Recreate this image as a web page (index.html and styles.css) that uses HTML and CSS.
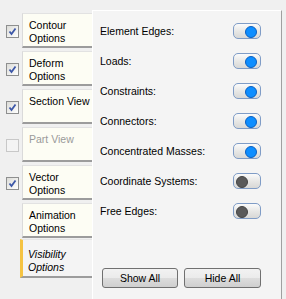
FILE: index.html
```html
<!DOCTYPE html>
<html lang="en">
<head>
  <meta charset="UTF-8" />
  <title>Visibility Options</title>
  <link rel="stylesheet" href="styles.css">
</head>
<body>

  <div class="dialog">

    <!-- Side tabs -->
    <div class="tab-list">
      <div class="tab-item">
        <span class="check on"><svg viewBox="0 0 11 11"><path d="M2.5 5.5 L4.5 8 L8.5 2.5" /></svg></span>
        <div class="tab">Contour<br>Options</div>
      </div>
      <div class="tab-item">
        <span class="check on"><svg viewBox="0 0 11 11"><path d="M2.5 5.5 L4.5 8 L8.5 2.5" /></svg></span>
        <div class="tab">Deform<br>Options</div>
      </div>
      <div class="tab-item">
        <span class="check on"><svg viewBox="0 0 11 11"><path d="M2.5 5.5 L4.5 8 L8.5 2.5" /></svg></span>
        <div class="tab">Section View</div>
      </div>
      <div class="tab-item">
        <span class="check disabled"></span>
        <div class="tab disabled">Part View</div>
      </div>
      <div class="tab-item">
        <span class="check on"><svg viewBox="0 0 11 11"><path d="M2.5 5.5 L4.5 8 L8.5 2.5" /></svg></span>
        <div class="tab">Vector<br>Options</div>
      </div>
      <div class="tab-item">
        <span class="check none"></span>
        <div class="tab">Animation<br>Options</div>
      </div>
      <div class="tab-item selected">
        <div class="tab">Visibility<br>Options</div>
      </div>
    </div>

    <!-- Visibility panel -->
    <div class="panel">
      <div class="rows">
        <div class="row"><span>Element Edges:</span><span class="toggle on"></span></div>
        <div class="row"><span>Loads:</span><span class="toggle on"></span></div>
        <div class="row"><span>Constraints:</span><span class="toggle on"></span></div>
        <div class="row"><span>Connectors:</span><span class="toggle on"></span></div>
        <div class="row"><span>Concentrated Masses:</span><span class="toggle on"></span></div>
        <div class="row"><span>Coordinate Systems:</span><span class="toggle"></span></div>
        <div class="row"><span>Free Edges:</span><span class="toggle"></span></div>
      </div>

      <div class="buttons">
        <button class="btn">Show All</button>
        <button class="btn">Hide All</button>
      </div>
    </div>

  </div>

</body>
</html>
```

FILE: styles.css
```css
* {
  box-sizing: border-box;
}

body {
  margin: 0;
  background: #f0f0f0;
  font-family: "Liberation Sans", Arial, sans-serif;
  font-size: 10.5px;
  color: #000;
}

.dialog {
  display: flex;
  height: 299px;
}

/* Side tabs */
.tab-list {
  width: 92px;
  padding-top: 13px;
}

.tab-item {
  display: flex;
  align-items: center;
  height: 35px;
  margin-bottom: 3px;
}

.check {
  width: 13px;
  height: 13px;
  margin: 2px 3px 0 6px;
  border: 1px solid #8e8f8f;
  background: linear-gradient(135deg, #dcdcd8, #ffffff);
  display: flex;
}

.check svg {
  width: 11px;
  height: 11px;
  fill: none;
  stroke: #3c57a8;
  stroke-width: 1.8;
}

.check.disabled {
  border-color: #c8c8c8;
  background: #f4f4f4;
}

.check.none {
  visibility: hidden;
}

.tab {
  width: 70px;
  height: 35px;
  padding: 5px 0 0 6px;
  line-height: 13px;
  background: #fdfdf4;
  border-top: 1px solid #e2e2e2;
  border-left: 1px solid #dadada;
  border-bottom: 2px solid #9c9c9c;
}

.tab.disabled {
  color: #9a9a9a;
}

.tab-item.selected {
  height: 39px;
  margin-top: -2px;
  padding-left: 20px;
}

.tab-item.selected .tab {
  width: 72px;
  height: 39px;
  padding: 8px 0 0 5px;
  font-style: italic;
  background: #f4f4f4;
  border-left: 3px solid #f5c342;
  border-top: 1px solid #e6e6e6;
}

/* Right panel */
.panel {
  width: 190px;
  height: 289px;
  margin-top: 10px;
  padding: 12px 20px 11px 7px;
  background: #f4f4f4;
  border-top: 1px solid #ffffff;
  border-left: 1px solid #ffffff;
  border-right: 1px solid #a0a0a0;
  display: flex;
  flex-direction: column;
}

.rows {
  display: flex;
  flex-direction: column;
  gap: 14px;
}

.row {
  display: flex;
  justify-content: space-between;
  align-items: center;
  height: 16px;
}

.toggle {
  position: relative;
  width: 28px;
  height: 16px;
  border: 1px solid #7f9cc6;
  border-radius: 5px;
  background: linear-gradient(#fbfbfb, #e6e6e4 55%, #d8d8d6);
}

.toggle::after {
  content: "";
  position: absolute;
  top: 2px;
  left: 2px;
  width: 10px;
  height: 10px;
  border-radius: 50%;
  background: #5a5a5a;
  border: 1px solid #444;
}

.toggle.on::after {
  left: auto;
  right: 3px;
  background: #0e8eff;
  border-color: #0a5fc0;
}

.buttons {
  margin-top: auto;
  display: flex;
  gap: 6px;
  padding-left: 2px;
}

.btn {
  width: 80px;
  height: 20px;
  padding: 0;
  font-family: inherit;
  font-size: 10.5px;
  color: #000;
  border: 1px solid #707070;
  border-radius: 3px;
  background: linear-gradient(#f2f2f2, #ebebeb 50%, #dddddd 51%, #cfcfcf);
}

.btn + .btn {
  width: 81px;
}
```
